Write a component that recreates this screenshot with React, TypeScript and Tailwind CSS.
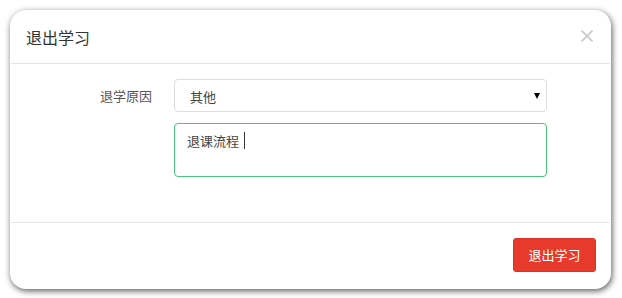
import { useState } from 'react';

const FONT = { fontFamily: '"Microsoft YaHei", "Noto Sans CJK SC", "Liberation Sans", sans-serif' };

export default function App() {
  const [reason, setReason] = useState('其他');
  const [note, setNote] = useState('退课流程');

  return (
    <div className="w-[622px] h-[298px] bg-white p-[10px]" style={FONT}>
      <div className="w-[601px] h-[279px] bg-white rounded-[16px] shadow-[1px_2px_6px_rgba(0,0,0,0.65)] flex flex-col">
        {/* Header */}
        <div className="flex items-center justify-between h-[54px] mx-px px-[15px] border-b border-[#e5e5e5]">
          <h4 className="text-[16px] text-[#333] leading-none">退出学习</h4>
          <button className="mr-[2px] -mt-[2px]">
            <svg width="12" height="12" viewBox="0 0 12 12" stroke="#c9c9c9" strokeWidth="1.6">
              <line x1="0.5" y1="0.5" x2="11.5" y2="11.5" />
              <line x1="11.5" y1="0.5" x2="0.5" y2="11.5" />
            </svg>
          </button>
        </div>

        {/* Body */}
        <div className="flex-1 pt-[15px] px-[15px]">
          <div className="flex items-center">
            <label className="w-[129px] text-right text-[13px] text-[#555] pr-[2px]">退学原因</label>
            <div className="relative ml-[20px] w-[373px]">
              <select
                value={reason}
                onChange={(e) => setReason(e.target.value)}
                className="appearance-none w-full h-[33px] border border-[#ddd] rounded-[4px] pl-[15px] pt-[2px] text-[13px] text-[#444] bg-white outline-none"
              >
                <option>其他</option>
                <option>课程难度</option>
                <option>时间冲突</option>
              </select>
              <span className="absolute right-[7px] top-[14px] w-0 h-0 border-l-[3.5px] border-r-[3.5px] border-t-[6px] border-l-transparent border-r-transparent border-t-black pointer-events-none" />
            </div>
          </div>
          <div className="relative ml-[149px] mt-[11px] w-[373px]">
            <textarea
              value={note}
              onChange={(e) => setNote(e.target.value)}
              className="w-full h-[54px] border border-[#4cc27a] rounded-[4px] px-[12px] py-[7px] text-[13px] text-[#444] resize-none outline-none block"
            />
            {/* caret of the focused field */}
            <span className="absolute left-[70px] top-[9px] w-px h-[17px] bg-[#333] pointer-events-none" />
          </div>
        </div>

        {/* Footer */}
        <div className="h-[67px] mx-px border-t border-[#e5e5e5] flex items-start justify-end pt-[15px] pr-[14px]">
          <button className="h-[34px] w-[83px] bg-[#e83a2c] text-white text-[13px] rounded-[3px] border border-[#d6342a]">
            退出学习
          </button>
        </div>
      </div>
    </div>
  );
}
